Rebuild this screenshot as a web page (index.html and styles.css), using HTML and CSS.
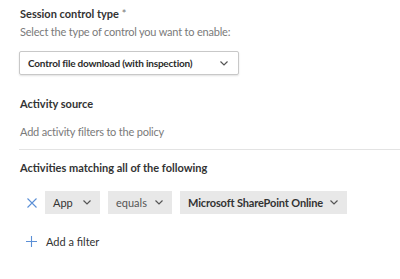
FILE: index.html
```html
<!DOCTYPE html>
<html lang="en">
<head>
    <meta charset="UTF-8">
    <title>Session control</title>
    <link rel="stylesheet" href="styles.css">
</head>
<body>
    <div class="panel">
        <div class="field-title">Session control type <span class="req">*</span></div>
        <div class="field-hint">Select the type of control you want to enable:</div>
        <div class="select">
            <span>Control file download (with inspection)</span>
            <svg class="chev" width="8" height="5" viewBox="0 0 8 5"><path d="M0.5 0.5 L4 4 L7.5 0.5" fill="none" stroke="#555" stroke-width="1.2"/></svg>
        </div>

        <div class="field-title source">Activity source</div>
        <div class="field-hint">Add activity filters to the policy</div>
    </div>

    <div class="divider"></div>

    <div class="panel">
        <div class="field-title matching">Activities matching all of the following</div>
        <div class="filter-row">
            <svg class="remove" width="10" height="10" viewBox="0 0 10 10"><path d="M0.5 0.5 L9.5 9.5 M9.5 0.5 L0.5 9.5" stroke="#5b8fd6" stroke-width="1.1"/></svg>
            <div class="pill pill-app">App <svg class="chev" width="8" height="5" viewBox="0 0 8 5"><path d="M0.5 0.5 L4 4 L7.5 0.5" fill="none" stroke="#555" stroke-width="1.2"/></svg></div>
            <div class="pill pill-op">equals <svg class="chev" width="8" height="5" viewBox="0 0 8 5"><path d="M0.5 0.5 L4 4 L7.5 0.5" fill="none" stroke="#555" stroke-width="1.2"/></svg></div>
            <div class="pill pill-value">Microsoft SharePoint Online <svg class="chev" width="8" height="5" viewBox="0 0 8 5"><path d="M0.5 0.5 L4 4 L7.5 0.5" fill="none" stroke="#555" stroke-width="1.2"/></svg></div>
        </div>
        <div class="add-filter">
            <svg width="11" height="11" viewBox="0 0 11 11"><path d="M5.5 0 V11 M0 5.5 H11" stroke="#5b8fd6" stroke-width="1.1"/></svg>
            <span>Add a filter</span>
        </div>
    </div>
</body>
</html>
```

FILE: styles.css
```css
body {
    font-family: Lato, "Open Sans", Arial, sans-serif;
    font-size: 11px;
    color: #333;
    background-color: #fff;
    margin: 0;
}
.panel {
    padding-left: 20px;
}
.field-title {
    font-weight: 700;
    line-height: 18px;
    padding-top: 5px;
}
.req {
    font-weight: 400;
    color: #777;
}
.field-hint {
    color: #7a7a7a;
    line-height: 18px;
    letter-spacing: -0.2px;
}
.select {
    box-sizing: border-box;
    width: 220px;
    height: 24px;
    margin: 10px 0 0 -1px;
    padding: 0 10px 0 8px;
    border: 1px solid #c8c8c8;
    border-radius: 2px;
    box-shadow: 0 1px 2px rgba(0, 0, 0, 0.12);
    display: flex;
    align-items: center;
    justify-content: space-between;
    font-size: 10px;
    font-weight: 700;
    letter-spacing: -0.2px;
    color: #2b2b2b;
    white-space: nowrap;
}
.field-title.source {
    padding-top: 20px;
}
.field-title.source + .field-hint {
    margin-top: 10px;
}
.divider {
    margin: 8px 0 0 19px;
    border-top: 1px solid #e3e3e3;
}
.field-title.matching {
    padding-top: 9px;
}
.filter-row {
    display: flex;
    align-items: center;
    margin-top: 14px;
}
.remove {
    margin: 0 8px 0 7px;
}
.pill {
    height: 23px;
    background-color: #e8e8e8;
    display: flex;
    align-items: center;
    justify-content: space-between;
    padding: 0 9px 0 8px;
    box-sizing: border-box;
    margin-right: 8px;
    white-space: nowrap;
}
.pill-app {
    width: 55px;
}
.pill-op {
    width: 64px;
    color: #555;
}
.pill-value {
    width: 167px;
    font-weight: 700;
    letter-spacing: -0.15px;
}
.add-filter {
    display: flex;
    align-items: center;
    margin-top: 21px;
    margin-left: 6px;
}
.add-filter svg {
    margin-right: 9px;
}
```
